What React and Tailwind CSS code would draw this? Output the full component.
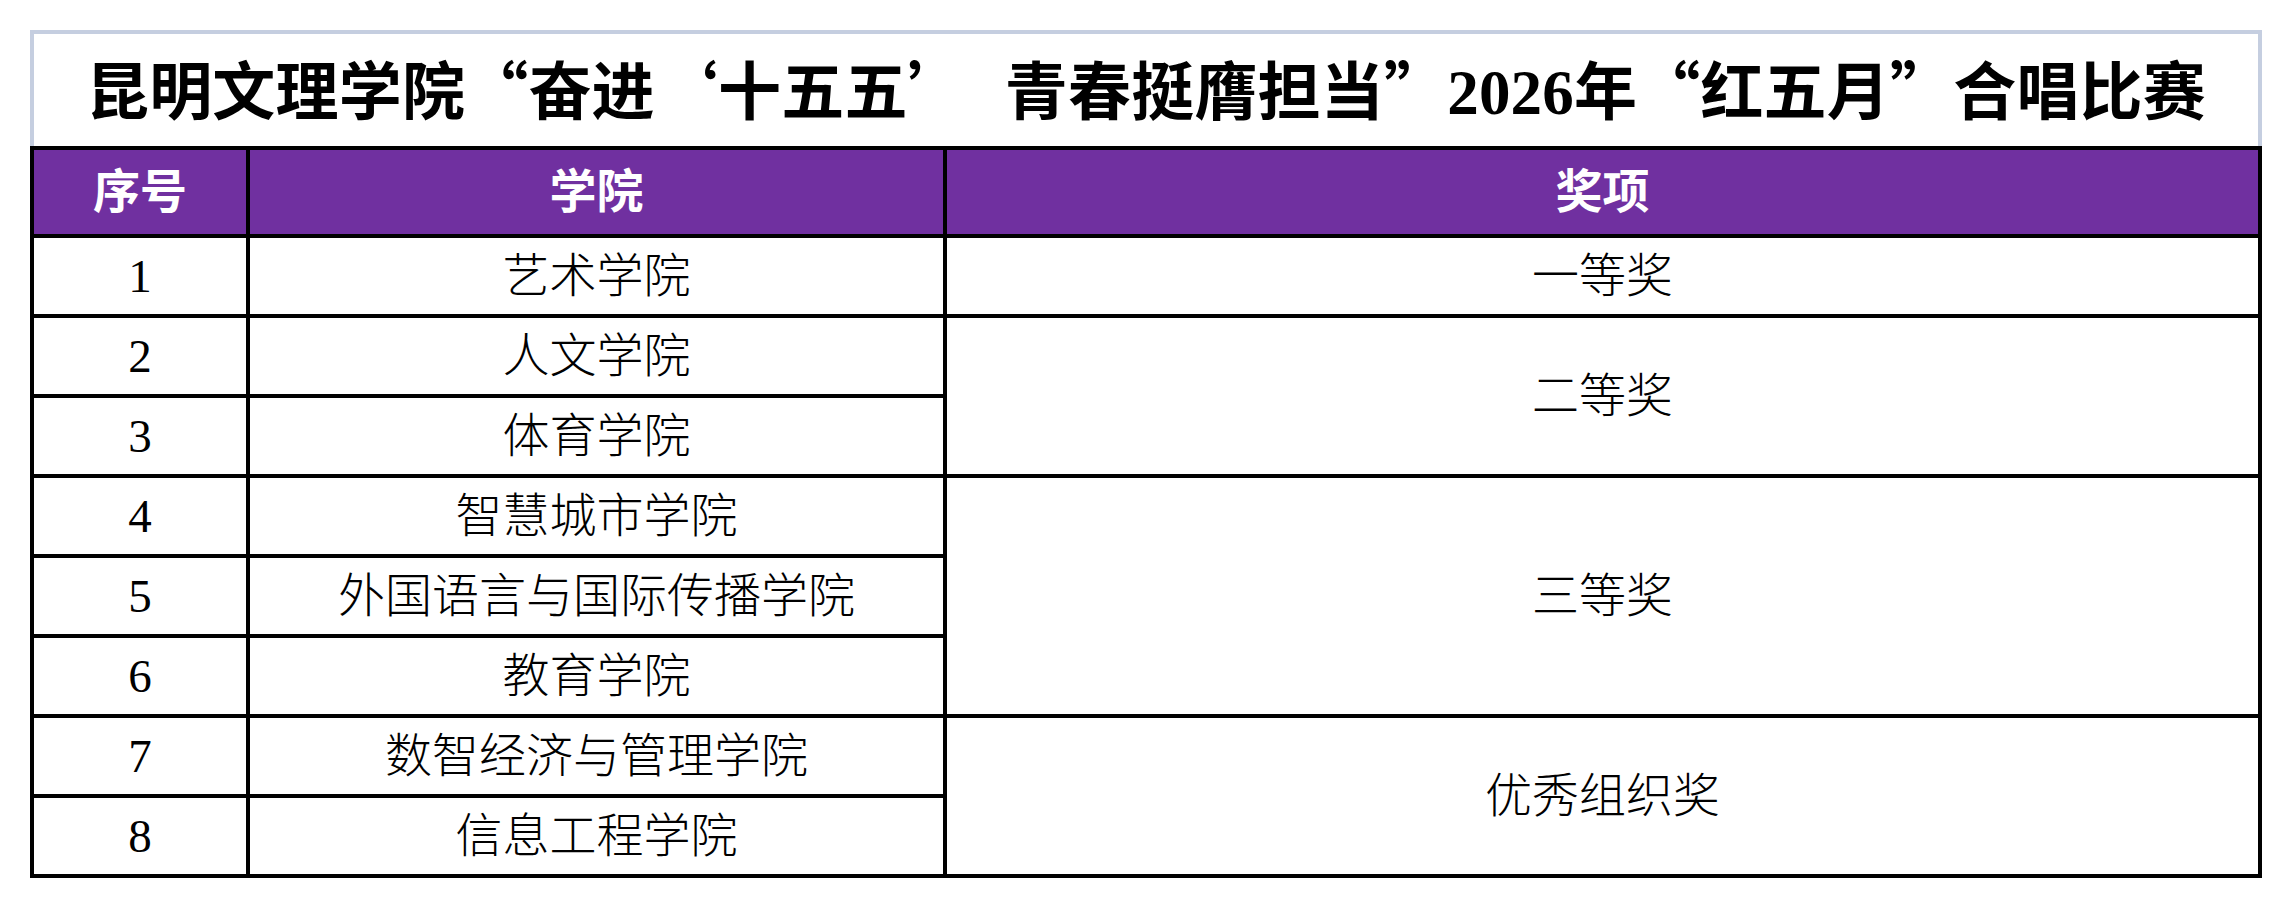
const rows = [
  { no: 1, college: "艺术学院" },
  { no: 2, college: "人文学院" },
  { no: 3, college: "体育学院" },
  { no: 4, college: "智慧城市学院" },
  { no: 5, college: "外国语言与国际传播学院" },
  { no: 6, college: "教育学院" },
  { no: 7, college: "数智经济与管理学院" },
  { no: 8, college: "信息工程学院" },
];

const rowStart = [
  "row-start-2",
  "row-start-3",
  "row-start-4",
  "row-start-5",
  "row-start-6",
  "row-start-7",
  "row-start-8",
  "row-start-9",
];

// award cells span several rows, placed by grid-row
const awards = [
  { label: "一等奖", cls: "row-start-2 row-span-1" },
  { label: "二等奖", cls: "row-start-3 row-span-2" },
  { label: "三等奖", cls: "row-start-5 row-span-3" },
  { label: "优秀组织奖", cls: "row-start-8 row-span-2" },
];

const Cell = ({ className = "", children }) => (
  <div className={`bg-white font-light flex items-center justify-center ${className}`}>
    {children}
  </div>
);

const App = () => {
  return (
    <div className="w-[2292px] h-[908px] bg-white pt-[30px] pl-[30px] font-['Liberation_Serif','Noto_Sans_CJK_SC',serif] text-black">
      <div className="w-[2232px]">
        <div className="h-[116px] border-[4px] border-b-0 border-[#c5cee0] flex items-center justify-center">
          <h1 className="text-[63px] font-bold whitespace-nowrap leading-none tracking-[0.2px]">
            昆明文理学院<span className="font-['Noto_Sans_CJK_SC']">“</span>奋进
            <span className="font-['Noto_Sans_CJK_SC']">‘</span>十五五
            <span className="font-['Noto_Sans_CJK_SC']">’</span>
            <span className="inline-block w-[34px]"></span>青春挺膺担当
            <span className="font-['Noto_Sans_CJK_SC']">”</span>2026年
            <span className="font-['Noto_Sans_CJK_SC']">“</span>红五月
            <span className="font-['Noto_Sans_CJK_SC']">”</span>合唱比赛
          </h1>
        </div>
        <div className="grid grid-cols-[212px_693px_1311px] grid-rows-[84px_repeat(8,76px)] gap-[4px] p-[4px] bg-black text-[47px] leading-none">
          <div className="bg-[#7030a0] text-white font-bold flex items-center justify-center">序号</div>
          <div className="bg-[#7030a0] text-white font-bold flex items-center justify-center">学院</div>
          <div className="bg-[#7030a0] text-white font-bold flex items-center justify-center">奖项</div>
          {rows.map((r, i) => [
            <Cell key={`n${r.no}`} className={`col-start-1 ${rowStart[i]}`}>
              {r.no}
            </Cell>,
            <Cell key={`c${r.no}`} className={`col-start-2 ${rowStart[i]}`}>
              {r.college}
            </Cell>,
          ])}
          {awards.map((a) => (
            <Cell key={a.label} className={`col-start-3 ${a.cls}`}>
              {a.label}
            </Cell>
          ))}
        </div>
      </div>
    </div>
  );
};

export default App;
